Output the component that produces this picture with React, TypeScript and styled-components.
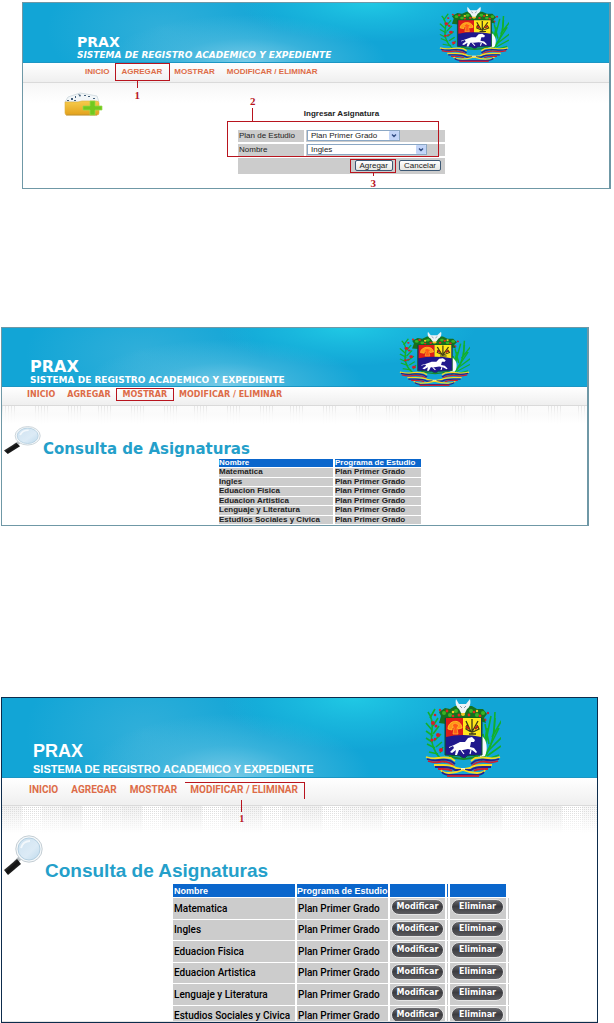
import React from "react";
import styled, { createGlobalStyle, css } from "styled-components";

const sans = `"Liberation Sans", Arial, sans-serif`;
const wide = `"DejaVu Sans", Verdana, sans-serif`;
const compact = `Roboto, "Liberation Sans", sans-serif`;
const red = "#b8141e";

const GlobalStyle = createGlobalStyle`
  * { box-sizing: border-box; }
  body { margin: 0; background: #fff; font-family: ${sans}; color: #222; }
  h1, h2, p, ul { margin: 0; padding: 0; }
  button, select { font-family: inherit; margin: 0; }
`;

const Page = styled.main`
  display: flex;
  flex-direction: column;
  padding-top: 2px;
`;

const Panel = styled.section<{ $margin: string; $line: string; $side?: number }>`
  margin: ${(p) => p.$margin};
  border: 1px solid ${(p) => p.$line};
  border-right-width: ${(p) => p.$side ?? 1}px;
  background: #fff;
  overflow: hidden;
`;

const Banner = styled.header<{ $height: number; $pad: string }>`
  display: flex;
  justify-content: space-between;
  align-items: flex-end;
  min-height: ${(p) => p.$height}px;
  padding: ${(p) => p.$pad};
  color: #fff;
  border-bottom: 1px solid #1b96c4;
  background:
    radial-gradient(ellipse 22% 66% at 59% 0, #20c8e4 0, rgba(32, 200, 228, 0.5) 45%, rgba(32, 200, 228, 0) 100%),
    radial-gradient(ellipse 24% 80% at 38% 100%, rgba(126, 205, 232, 0.95) 0, rgba(90, 190, 224, 0.5) 50%, rgba(90, 190, 224, 0) 100%),
    radial-gradient(ellipse 20% 110% at 24% 45%, rgba(70, 182, 220, 0.6) 0, rgba(70, 182, 220, 0) 100%),
    #12a5d6;
`;

const Brand = styled.div<{ $bottom: number }>`
  padding-bottom: ${(p) => p.$bottom}px;
  white-space: nowrap;
`;

const BrandName = styled.h1<{ $size: number; $line: number; $font: string }>`
  font: bold ${(p) => p.$size}px/${(p) => p.$line}px ${(p) => p.$font};
`;

const Tagline = styled.p<{ $size: number; $font: string; $italic?: boolean }>`
  font: bold ${(p) => p.$size}px/12px ${(p) => p.$font};
  font-style: ${(p) => (p.$italic ? "italic" : "normal")};
`;

const Nav = styled.nav<{ $height: number; $left: number }>`
  min-height: ${(p) => p.$height}px;
  padding-left: ${(p) => p.$left}px;
  background: linear-gradient(#fff, #efefef);
  border-bottom: 1px solid #dadada;
`;

const NavList = styled.ul<{ $gap: number; $line: number }>`
  display: flex;
  gap: ${(p) => p.$gap}px;
  list-style: none;
  line-height: ${(p) => p.$line}px;
`;

const NavItem = styled.li`
  position: relative;
`;

const NavLink = styled.a<{ $size: number; $font: string }>`
  display: block;
  font-family: ${(p) => p.$font};
  font-size: ${(p) => p.$size}px;
  font-weight: bold;
  color: #dd6c48;
  text-decoration: none;
  white-space: nowrap;
`;

const Frame = styled.span<{ $inset: string; $open?: boolean }>`
  position: absolute;
  inset: ${(p) => p.$inset};
  z-index: 1;
  border: 1px solid ${red};
  pointer-events: none;
  ${(p) => p.$open && css`border-left: 0; border-bottom: 0;`}
`;

const Callout = styled.span<{ $left: number; $top: number; $tick: number; $above?: boolean; $size?: number }>`
  position: absolute;
  z-index: 1;
  left: ${(p) => p.$left}px;
  top: ${(p) => p.$top}px;
  display: flex;
  flex-direction: ${(p) => (p.$above ? "column-reverse" : "column")};
  align-items: center;
  font: bold ${(p) => p.$size ?? 11}px/14px "Liberation Serif", serif;
  color: ${red};
  &::before {
    content: "";
    width: 1px;
    height: ${(p) => p.$tick}px;
    background: ${red};
  }
`;

const soft = css`background: linear-gradient(#f6f6f6, #fff 20px);`;
const hairlines = css`
  background:
    linear-gradient(rgba(246, 246, 246, 0.4), rgba(250, 250, 250, 0.9) 8px, #fff 18px),
    repeating-linear-gradient(90deg, transparent 0 15px, #fff 15px 32px),
    repeating-linear-gradient(90deg, #dcdcdc 0 1px, #fff 1px 3px);
`;
const dots = css`
  background:
    linear-gradient(rgba(255, 255, 255, 0.1), #fff 27px),
    repeating-linear-gradient(90deg, rgba(210, 210, 210, 0.35) 0 20px, transparent 20px 40px, rgba(210, 210, 210, 0.2) 40px 60px),
    repeating-linear-gradient(#fff 0 1px, transparent 1px 2px),
    repeating-linear-gradient(90deg, #cfcfcf 0 1px, #fff 1px 2px);
`;

const FormBody = styled.div`
  ${soft}
  display: flex;
  align-items: flex-start;
  padding: 9px 0 14px 41px;
`;

const Form = styled.form`
  margin: 16px 0 0 135px;
  width: 207px;
`;

const FormTitle = styled.h2`
  font: bold 8px/12px ${sans};
  text-align: center;
  margin-bottom: 10px;
`;

const Fields = styled.div`
  position: relative;
  display: grid;
  grid-template-columns: 66px 1fr;
  gap: 2px;
  margin-bottom: 2px;
`;

const Label = styled.label`
  background: #ccc;
  font-size: 8px;
  line-height: 12px;
  padding-left: 1px;
`;

const Field = styled.div`
  background: #ccc;
  height: 12px;
  padding-left: 1px;
`;

const SelectBox = styled.span<{ $width: number }>`
  display: flex;
  position: relative;
  width: ${(p) => p.$width}px;
  svg { position: absolute; right: 1px; top: 1px; pointer-events: none; }
`;

const Select = styled.select`
  appearance: none;
  width: 100%;
  height: 11px;
  border: 1px solid #8ba7c4;
  border-radius: 0;
  background: #fff;
  color: #222;
  font-size: 8px;
  line-height: 9px;
  padding: 0 12px 0 3px;
`;

const Actions = styled.div`
  display: flex;
  justify-content: flex-end;
  gap: 6px;
  padding: 2px 4px 3px;
  background: #ccc;
`;

const ActionSlot = styled.span`
  position: relative;
  display: flex;
`;

const FormButton = styled.button`
  height: 11px;
  padding: 0 4px;
  border: 1px solid #3c5874;
  border-radius: 2px;
  background: linear-gradient(#fff, #e6e6e2);
  color: #222;
  font-size: 8px;
  line-height: 9px;
`;

const ListBody = styled.div<{ $height: number; $top: number; $variant: "hairlines" | "dots" }>`
  ${(p) => (p.$variant === "dots" ? dots : hairlines)}
  height: ${(p) => p.$height}px;
  overflow: hidden;
  padding-top: ${(p) => p.$top}px;
`;

const Heading = styled.div<{ $height: number; $left: number }>`
  display: flex;
  align-items: flex-start;
  height: ${(p) => p.$height}px;
  padding-left: ${(p) => p.$left}px;
  gap: 2px;
`;

const Title = styled.h2<{ $size: number; $font: string; $line: number }>`
  align-self: flex-end;
  font: bold ${(p) => p.$size}px/${(p) => p.$line}px ${(p) => p.$font};
  color: #249fca;
  white-space: nowrap;
`;

const SmallTable = styled.table`
  margin-left: 215px;
  width: 206px;
  height: 67px;
  border-collapse: separate;
  border-spacing: 2px 1px;
  font: bold 8px/8px ${sans};
  white-space: nowrap;
  th, td { padding: 0; text-align: left; background: #ccc; }
  th { background: #0a66cc; color: #fff; }
  th:first-child { width: 114px; }
`;

const EditTable = styled.table`
  margin-left: 169px;
  border-collapse: separate;
  border-spacing: 2px 1px;
  font: 500 10px/10px ${compact};
  color: #000;
  white-space: nowrap;
  th, td { padding: 0 1px; text-align: left; background: #ccc; }
  th { height: 13px; background: #0a66cc; color: #fff; font: bold 9px/12px ${sans}; }
  td { height: 21px; }
  tr:nth-child(even) td { height: 20px; }
  td:nth-child(n + 3) { padding: 0 0 3px 1px; }
  th:nth-child(1) { width: 122px; }
  th:nth-child(2) { width: 91px; padding: 0; }
  thead td:nth-child(3) { width: 55px; }
  thead td:nth-child(5) { width: 56px; }
  td:nth-child(4), td:nth-child(6) { width: 1px; padding: 0; }
`;

const BlankHead = styled.td`
  && { height: 13px; background: #0a66cc; padding: 0; }
`;

const Pill = styled.button`
  display: block;
  width: 53px;
  height: 16px;
  padding: 0;
  border: 1px solid #e4e4e4;
  border-radius: 8px;
  background: linear-gradient(#6c6c70, #3c3c40 45%, #5c5c60);
  color: #fff;
  font: bold 8px/12px ${wide};
`;

const BottomRule = styled.div`
  height: 1px;
  background: #e4e4e4;
`;

function Emblem({ width, height }: { width: number; height: number }) {
  return (
    <svg width={width} height={height} viewBox="0 0 76 79" preserveAspectRatio="none" role="img" aria-label="Escudo">
      <g fill="none" stroke="#12b02c" strokeWidth="1.6">
        <path d="M20 64C9 57 5 44 7 32C8 24 6 18 3 14" />
        <path d="M7 32l-6-7M8 38l-7-5M7 44l-6-4M10 50l-8-4M13 56l-9-2M8 28l5-8M8 36l6-8M9 43l7-7M11 49l6-5M15 55l3-6M5 20l5-9M16 60l-8 1" />
        <path d="M56 63C64 56 69 42 70 20" />
        <path d="M57 61L62 30M58 58L66 18M60 58L74 30M62 54L78 38M62 58L76 48M60 62L74 57M60 48L58 36M64 46L60 26M67 39L77 22M69 34L70 14" />
      </g>
      <g fill="#d31e2c">
        <circle cx="8" cy="25" r="2" /><circle cx="11" cy="28" r="1.5" /><circle cx="13" cy="37" r="2" />
        <circle cx="7" cy="42" r="1.6" /><circle cx="10" cy="41" r="1.2" /><circle cx="16" cy="52" r="2" />
        <circle cx="10" cy="17" r="1.3" /><circle cx="60" cy="22" r="1.4" /><circle cx="63" cy="15" r="1.2" />
      </g>
      <path d="M16 18l-2-4 6-4 5 1 5-3h17l5 3 6 0 4 5-3 4 2 5-6-2-4 2-5-3H26l-5 4-7-1z" fill="#16711f" />
      <g fill="#39b524">
        <circle cx="19" cy="15" r="2" /><circle cx="25" cy="17" r="2" /><circle cx="31" cy="13" r="2" />
        <circle cx="46" cy="13" r="2" /><circle cx="52" cy="17" r="2" /><circle cx="58" cy="15" r="2" />
      </g>
      <g fill="#e12a20">
        <circle cx="22" cy="13" r="1.4" /><circle cx="28" cy="18" r="1.3" /><circle cx="34" cy="17" r="1.5" />
        <circle cx="44" cy="17" r="1.4" /><circle cx="49" cy="14" r="1.3" /><circle cx="55" cy="18" r="1.4" /><circle cx="15" cy="12" r="1.2" />
      </g>
      <g fill="#f5c928"><circle cx="28" cy="14" r="1.3" /><circle cx="38" cy="16" r="2" /><circle cx="52" cy="13" r="1.2" /></g>
      <path d="M31 1l3 5h7l4-5c1 4 0 8-3 10l-2 4h-4l-2-4c-3-2-4-6-3-10z" fill="#eef3f6" />
      <path d="M35 8l2 2M41 8l-2 2" stroke="#8796a0" />
      <path d="M57 38c5 4 6 13 3 20l-5 1V38z" fill="#f7fafc" />
      <path d="M20 20h37v37l-15 1-3 3-4-3-15-1z" fill="#20188c" stroke="#0d5a24" />
      <path d="M21 20h17v17q-9 0-17 2z" fill="#dd1c18" />
      <path d="M38 20h18v19q-8-2-18-2z" fill="#ffe81c" />
      <path d="M23 31c0-9 13-11 14-1l-4 1c-1-5-6-4-6 1z" fill="#ff9418" stroke="#ffd32a" strokeWidth=".8" />
      <path d="M27 27l3-2 4 2-2 3 1 6h-5l1-6z" fill="#ff5a18" stroke="#ffc02c" strokeWidth=".7" />
      <g fill="none" stroke="#3d3a16" strokeWidth="1.3">
        <path d="M41 23l5 11M53 23l-6 11M47 21v15M42 27l-1 4 5 3M52 27l2 4-6 3M44 36h7" />
      </g>
      <path d="M41 28l3 3M53 28l-3 3" stroke="#b01c1c" strokeWidth="2" />
      <path d="M24 49l5-2 6-3 5 0 3-4 4-1 3 3-1 2-3 0-1 5 4 1 3 4-1 1-4-3-4-1-5 1-4 0-2 5-2 0 1-5-4 3-2-1 4-4-1-2-4 2z" fill="#fff" />
      <path d="M36 52l3 4M46 52l-1 4" stroke="#fff" strokeWidth="1.2" />
      <path d="M24 58q15 6 29 0" fill="none" stroke="#188a2c" strokeWidth="2" />
      <g fill="none" strokeWidth="1.8">
        <path d="M1 59q6 2 12 1t13 0l4 3" stroke="#f7d922" />
        <path d="M2 61q6 2 12 1t12 1l4 3" stroke="#26208e" />
        <path d="M3 63q6 2 11 1t11 1l4 3" stroke="#ce2030" />
        <path d="M75 59q-6 2-12 1t-13 0l-4 3" stroke="#f7d922" />
        <path d="M74 61q-6 2-12 1t-12 1l-4 3" stroke="#26208e" />
        <path d="M73 63q-6 2-11 1t-11 1l-4 3" stroke="#ce2030" />
        <path d="M9 67h9q9 0 13 3l5 1M67 67h-9q-9 0-13 3l-5 1" stroke="#f7d922" />
        <path d="M10 69h8q8 0 12 3l6 0M66 69h-8q-8 0-12 3l-6 0" stroke="#26208e" />
        <path d="M13 71h5q6 0 9 2M63 71h-5q-6 0-9 2" stroke="#ce2030" />
        <path d="M36 70h4v3h-4z" fill="#f4f0df" stroke="none" />
        <path d="M16 72q1 3 8 3t14-3q7 3 14 3t8-3" stroke="#f7d922" />
        <path d="M17 74q2 3 9 3h24q7 0 9-3" stroke="#26208e" />
        <path d="M22 78h32" stroke="#ce2030" />
      </g>
    </svg>
  );
}

function Magnifier({ width, height }: { width: number; height: number }) {
  return (
    <svg width={width} height={height} viewBox="0 0 40 40" preserveAspectRatio="none" aria-hidden="true">
      <defs>
        <linearGradient id="lens" x1="0" y1="0" x2="1" y2="1">
          <stop offset="0" stopColor="#cfe2f0" /><stop offset=".6" stopColor="#dcebf6" /><stop offset="1" stopColor="#bcd9ec" />
        </linearGradient>
        <linearGradient id="grip" x1="0" y1="0" x2="1" y2="1">
          <stop offset="0" stopColor="#777" /><stop offset=".5" stopColor="#111" /><stop offset="1" stopColor="#444" />
        </linearGradient>
      </defs>
      <path d="M18 22l-6 6" stroke="#b8bec2" strokeWidth="4" />
      <path d="M14 24L1 35l4 5 13-11z" fill="url(#grip)" />
      <circle cx="26" cy="14" r="13.2" fill="#f5f8fa" stroke="#c4ced4" strokeWidth="1" />
      <circle cx="26" cy="14" r="11" fill="url(#lens)" stroke="#b4cfe0" strokeWidth="1" />
      <path d="M18 13q2-7 9-7" fill="none" stroke="#fff" strokeWidth="2" opacity=".7" />
    </svg>
  );
}

function FolderAdd() {
  return (
    <svg width="39" height="24" viewBox="0 0 39 24" aria-hidden="true">
      <defs>
        <linearGradient id="folder" x1="0" y1="0" x2="0" y2="1">
          <stop offset="0" stopColor="#f6cc4c" /><stop offset="1" stopColor="#e3a11c" />
        </linearGradient>
      </defs>
      <path d="M1 10l3-5 12-4 6 1 11 2 2 6z" fill="#f2f6f8" stroke="#c6d2d8" strokeWidth=".7" />
      <g fill="#45617c">
        <path d="M3 8h2v1H3zM7 6h2v2H7zM11 4h1v2h-1zM14 2l3 1-1 2zM20 3h2v1h-2zM24 4h2v1h-2zM10 8h2v1h-2zM29 6h2v1h-2z" />
      </g>
      <path d="M1 10h13l4-1h14q3 0 3 2v10q0 2-2 2H3q-2 0-2-2z" fill="url(#folder)" stroke="#dfae3c" strokeWidth=".6" />
      <path d="M2 23h31" stroke="#b98a28" strokeWidth=".8" />
      <path d="M26 9h5v5h7v4h-7v5h-5v-5h-7v-4h7z" fill="#72c81e" stroke="#97dc4c" strokeWidth=".7" />
    </svg>
  );
}

function Arrow() {
  return (
    <svg width="10" height="9" viewBox="0 0 10 9" aria-hidden="true">
      <rect width="10" height="9" rx="1" fill="#c3d5f8" />
      <path d="M3 3.5l2 2 2-2" fill="none" stroke="#344f85" strokeWidth="1.4" />
    </svg>
  );
}

type MenuProps = {
  active: string;
  size: number;
  font: string;
  mark: React.ReactNode;
};

const menu = ["INICIO", "AGREGAR", "MOSTRAR", "MODIFICAR / ELIMINAR"];

function MenuItems({ active, size, font, mark }: MenuProps) {
  return (
    <>
      {menu.map((item) => (
        <NavItem key={item}>
          <NavLink href="#" $size={size} $font={font}>{item}</NavLink>
          {item === active && mark}
        </NavItem>
      ))}
    </>
  );
}

const tagline = "SISTEMA DE REGISTRO ACADEMICO Y EXPEDIENTE";
const subjects = [
  "Matematica",
  "Ingles",
  "Eduacion Fisica",
  "Eduacion Artistica",
  "Lenguaje y Literatura",
  "Estudios Sociales y Civica",
];

export default function App() {
  return (
    <Page>
      <GlobalStyle />

      <Panel $margin="0 3px 138px 22px" $line="#6f98a6" $side={2}>
        <Banner $height={60} $pad="0 100px 0 54px">
          <Brand $bottom={1}>
            <BrandName $size={14} $line={13} $font={wide}>PRAX</BrandName>
            <Tagline $size={9} $font={wide} $italic>{tagline}</Tagline>
          </Brand>
          <Emblem width={70} height={56} />
        </Banner>
        <Nav $height={20} $left={62}>
          <NavList $gap={12} $line={18}>
            <MenuItems
              active="AGREGAR"
              size={8}
              font={sans}
              mark={
                <>
                  <Frame $inset="0 -8px 0 -6px" />
                  <Callout $left={13} $top={18} $tick={7}>1</Callout>
                </>
              }
            />
          </NavList>
        </Nav>
        <FormBody>
          <FolderAdd />
          <Form onSubmit={(e) => e.preventDefault()}>
            <FormTitle>Ingresar Asignatura</FormTitle>
            <Fields>
              <Label htmlFor="plan">Plan de Estudio</Label>
              <Field>
                <SelectBox $width={93}>
                  <Select id="plan"><option>Plan Primer Grado</option></Select>
                  <Arrow />
                </SelectBox>
              </Field>
              <Label htmlFor="nombre">Nombre</Label>
              <Field>
                <SelectBox $width={120}>
                  <Select id="nombre"><option>Ingles</option></Select>
                  <Arrow />
                </SelectBox>
              </Field>
              <Frame $inset="-9px 6px -1px -11px" />
              <Callout $left={12} $top={-36} $tick={13} $above>2</Callout>
            </Fields>
            <Actions>
              <ActionSlot>
                <FormButton type="submit">Agregar</FormButton>
                <Frame $inset="-1px -3px -2px -5px" />
                <Callout $left={16} $top={13} $tick={3}>3</Callout>
              </ActionSlot>
              <FormButton type="button">Cancelar</FormButton>
            </Actions>
          </Form>
        </FormBody>
      </Panel>

      <Panel $margin="0 25px 171px 1px" $line="#6f98a6" $side={2}>
        <Banner $height={59} $pad="0 117px 0 28px">
          <Brand $bottom={0}>
            <BrandName $size={16} $line={14} $font={wide}>PRAX</BrandName>
            <Tagline $size={9} $font={wide}>{tagline}</Tagline>
          </Brand>
          <Emblem width={71} height={55} />
        </Banner>
        <Nav $height={19} $left={25}>
          <NavList $gap={12} $line={15}>
            <MenuItems active="MOSTRAR" size={8} font={wide} mark={<Frame $inset="1px -7px 1px -7px" />} />
          </NavList>
        </Nav>
        <ListBody $height={119} $top={20} $variant="hairlines">
          <Heading $height={32} $left={1}>
            <Magnifier width={38} height={28} />
            <Title $size={15} $font={wide} $line={18}>Consulta de Asignaturas</Title>
          </Heading>
          <SmallTable>
            <thead><tr><th>Nombre</th><th>Programa de Estudio</th></tr></thead>
            <tbody>
              {subjects.map((s) => (
                <tr key={s}><td>{s}</td><td>Plan Primer Grado</td></tr>
              ))}
            </tbody>
          </SmallTable>
        </ListBody>
      </Panel>

      <Panel $margin="0 16px 0 1px" $line="#0d2c4c">
        <Banner $height={80} $pad="0 96px 0 31px">
          <Brand $bottom={2}>
            <BrandName $size={18} $line={24} $font={sans}>PRAX</BrandName>
            <Tagline $size={11} $font={sans}>{tagline}</Tagline>
          </Brand>
          <Emblem width={76} height={79} />
        </Banner>
        <Nav $height={28} $left={27}>
          <NavList $gap={13} $line={23}>
            <MenuItems
              active="MODIFICAR / ELIMINAR"
              size={10}
              font={compact}
              mark={
                <>
                  <Frame $inset="4px -7px 2px -5px" $open />
                  <Callout $left={49} $top={22} $tick={12} $size={10}>1</Callout>
                </>
              }
            />
          </NavList>
        </Nav>
        <ListBody $height={215} $top={29} $variant="dots">
          <Heading $height={48} $left={1}>
            <Magnifier width={40} height={40} />
            <Title $size={19} $font={sans} $line={24}>Consulta de Asignaturas</Title>
          </Heading>
          <EditTable>
            <thead>
              <tr>
                <th>Nombre</th><th>Programa de Estudio</th>
                <BlankHead /><BlankHead /><BlankHead />
              </tr>
            </thead>
            <tbody>
              {subjects.map((s) => (
                <tr key={s}>
                  <td>{s}</td>
                  <td>Plan Primer Grado</td>
                  <td><Pill type="button">Modificar</Pill></td>
                  <td />
                  <td><Pill type="button">Eliminar</Pill></td>
                  <td />
                </tr>
              ))}
            </tbody>
          </EditTable>
        </ListBody>
        <BottomRule />
      </Panel>
    </Page>
  );
}
